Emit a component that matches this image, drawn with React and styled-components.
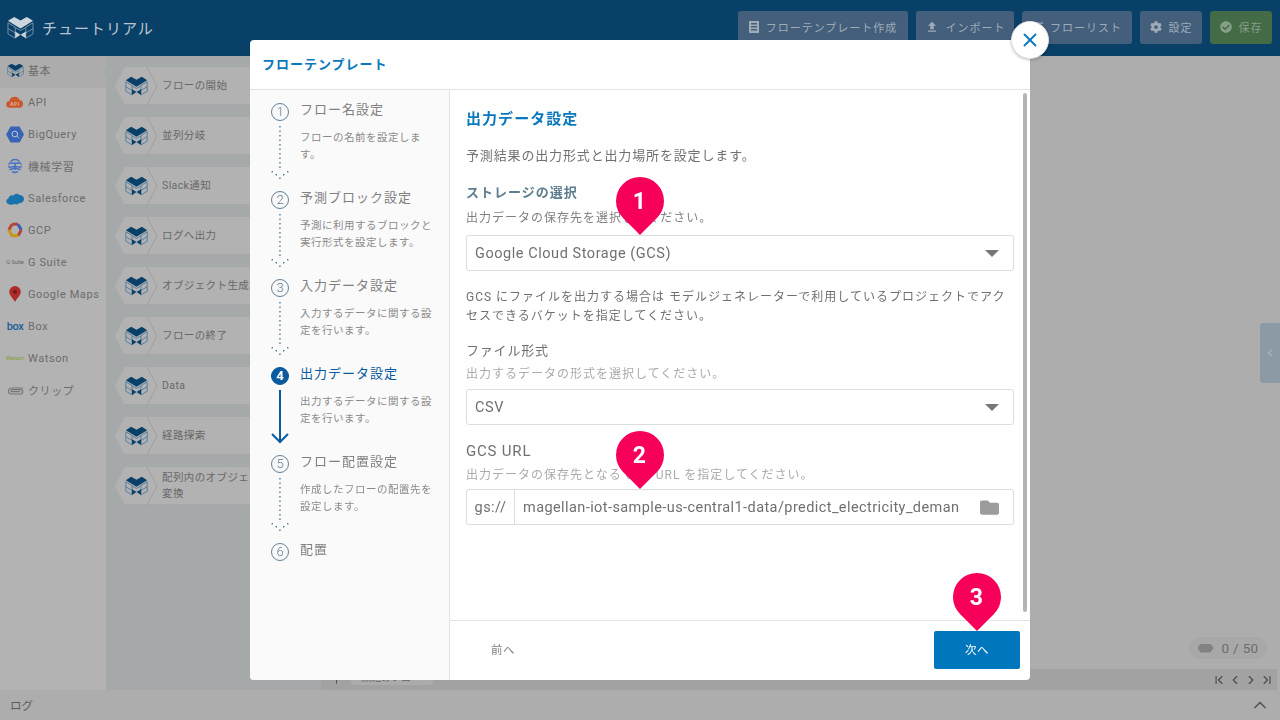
import React from "react";
import styled, { createGlobalStyle } from "styled-components";
import { FaCog, FaCheckCircle, FaFolder, FaList } from "react-icons/fa";
import { MdFileUpload } from "react-icons/md";
import { ChevronFirst, ChevronLast, ChevronLeft, ChevronRight, ChevronUp, Plus, X } from "lucide-react";

const GlobalStyle = createGlobalStyle`
  html, body { margin: 0; padding: 0; height: 100%; }
  body {
    font-family: Roboto, "Noto Sans CJK JP", sans-serif;
    overflow: hidden;
  }
  * { box-sizing: border-box; }
`;

// The page behind the dialog is painted in its dimmed colours directly.
const Page = styled.div`
  width: 1280px;
  height: 720px;
  display: flex;
  flex-direction: column;
  background: #adadad;
`;

/* top bar */
const Header = styled.header`
  height: 56px;
  flex: none;
  background: #094068;
  display: flex;
  align-items: center;
  justify-content: space-between;
  padding: 0 8px 1px 7px;
`;

const Brand = styled.div`
  display: flex;
  align-items: center;
  gap: 8px;
  color: #bcc6d0;
  font-size: 15px;
  letter-spacing: 1px;
`;

const Toolbar = styled.div`
  display: flex;
  gap: 8px;
`;

const ToolButton = styled.button`
  height: 33px;
  width: ${(p) => p.$w}px;
  border: 0;
  border-radius: 3px;
  padding: 0 0 2px;
  display: flex;
  align-items: center;
  justify-content: center;
  gap: 7px;
  font: inherit;
  font-size: 11px;
  letter-spacing: 1px;
  color: ${(p) => (p.$save ? "#869f86" : "#9fabb7")};
  background: ${(p) => (p.$save ? "#436b46" : "#445f7c")};
`;

/* main area */
const Main = styled.div`
  flex: 1;
  display: flex;
  min-height: 0;
`;

const Sidebar = styled.nav`
  width: 106px;
  flex: none;
  background: #b3b3b3;
`;

const SideItem = styled.div`
  position: relative;
  height: 32px;
  display: flex;
  align-items: center;
  padding: 0 0 4px 6px;
  gap: 4px;
  font-size: 11px;
  letter-spacing: 0.6px;
  white-space: nowrap;
  color: #6c6c6c;
  background: ${(p) => (p.$active ? "#acacac" : "transparent")};

  ${(p) =>
    p.$active &&
    `&::after {
      content: "";
      position: absolute;
      right: 0;
      top: 12px;
      border: 4px solid transparent;
      border-right-color: #a6a9a9;
    }`}
`;

const SideIcon = styled.span`
  width: 18px;
  height: 18px;
  flex: none;
  display: flex;
  align-items: center;
  justify-content: center;
`;

const Palette = styled.div`
  width: 215px;
  flex: none;
  background: #a6a9a9;
  padding: 11px 8px 0 9px;
  display: flex;
  flex-direction: column;
  gap: 12px;
`;

const Block = styled.div`
  position: relative;
  height: 38px;
  flex: none;
  display: flex;
  align-items: center;
  padding-left: 47px;
  background: #b2b2b2;
  border-bottom: 1px solid #a6a6a6;
  clip-path: polygon(0 50%, 10px 0, 100% 0, 100% 100%, 10px 100%);
  font-size: 10.5px;
  line-height: 16px;
  letter-spacing: 0.4px;
  color: #686868;
`;

const BlockName = styled.span`
  max-width: 128px;
`;

const BlockShape = styled.svg`
  position: absolute;
  left: 0;
  top: 0;
`;

const BlockIcon = styled.span`
  position: absolute;
  left: 10px;
  top: 9px;
  display: flex;
`;

const Canvas = styled.div`
  flex: 1;
  display: flex;
  flex-direction: column;
  min-width: 0;
`;

const Stage = styled.div`
  flex: 1;
  position: relative;
`;

const Counter = styled.div`
  position: absolute;
  right: 13px;
  bottom: 10px;
  width: 78px;
  height: 22px;
  border-radius: 11px;
  background: #a8a8a8;
  display: flex;
  align-items: center;
  justify-content: center;
  gap: 8px;
  font-size: 13.5px;
  letter-spacing: 0.3px;
  color: #6c6c6c;
`;

const CounterDot = styled.span`
  width: 16px;
  height: 9px;
  background: #828282;
  clip-path: polygon(3px 0, 13px 0, 100% 50%, 13px 100%, 3px 100%, 0 50%);
`;

const SideToggle = styled.div`
  position: absolute;
  right: 0;
  top: 267px;
  width: 20px;
  height: 60px;
  border-radius: 3px 0 0 3px;
  background: #8c9aa6;
  color: #bcc4cc;
  display: flex;
  align-items: center;
  justify-content: center;
`;

const TabBar = styled.div`
  height: 21px;
  flex: none;
  margin-right: 3px;
  background: #a2a2a2;
  display: flex;
  align-items: center;
  color: #555;
`;

const AddTab = styled.span`
  width: 30px;
  display: flex;
  justify-content: center;
`;

const Tab = styled.div`
  width: 82px;
  height: 15px;
  border-radius: 0 0 3px 3px;
  margin-top: -5px;
  background: #ababab;
  font-size: 10px;
  line-height: 15px;
  padding-left: 10px;
  color: #666;
`;

const Pager = styled.div`
  margin-left: auto;
  margin-right: 3px;
  display: flex;
  gap: 2px;
  color: #4c4c4c;
`;

const LogBar = styled.footer`
  height: 30px;
  flex: none;
  background: #adadad;
  display: flex;
  align-items: center;
  justify-content: space-between;
  padding: 0 10px;
  font-size: 11.5px;
  color: #5c5c5c;
`;

/* dialog */
const Overlay = styled.div`
  position: fixed;
  inset: 0;
  display: flex;
  justify-content: center;
  padding-top: 40px;
`;

const Modal = styled.div`
  position: relative;
  width: 780px;
  height: 640px;
  background: #fff;
  border-radius: 4px;
  display: flex;
  flex-direction: column;
`;

const ModalTitle = styled.div`
  height: 50px;
  flex: none;
  display: flex;
  align-items: center;
  padding: 0 0 2px 12px;
  border-bottom: 1px solid #e3e3e3;
  color: #0a78bd;
  font-size: 13px;
  font-weight: 700;
  letter-spacing: 1px;
`;

const CloseButton = styled.button`
  position: absolute;
  right: -19px;
  top: -19px;
  width: 38px;
  height: 38px;
  border-radius: 50%;
  border: 1px solid #e2e2e2;
  background: #fff;
  box-shadow: 0 1px 3px rgba(0, 0, 0, 0.25);
  color: #0a78bd;
  padding: 0;
  display: flex;
  align-items: center;
  justify-content: center;
`;

const ModalBody = styled.div`
  flex: 1;
  display: flex;
  min-height: 0;
`;

const Steps = styled.div`
  width: 200px;
  flex: none;
  background: #fafafa;
  border-right: 1px solid #e3e3e3;
  border-radius: 0 0 0 4px;
  padding: 10px 0 0 20px;
`;

const Step = styled.div`
  height: 88px;
  display: grid;
  grid-template-columns: 20px 1fr;
  column-gap: 10px;
  align-content: start;
`;

const StepMarker = styled.div`
  display: flex;
  flex-direction: column;
  align-items: center;
  padding-top: 3px;
`;

const StepNumber = styled.span`
  width: 18px;
  height: 18px;
  flex: none;
  border-radius: 50%;
  border: 1px solid ${(p) => (p.$active ? "#0a5a9e" : "#5f8096")};
  background: ${(p) => (p.$active ? "#0a5a9e" : "transparent")};
  color: ${(p) => (p.$active ? "#fff" : "#5f8096")};
  font-size: 13px;
  font-weight: ${(p) => (p.$active ? 700 : 300)};
  line-height: 16px;
  text-align: center;
`;

const StepLine = styled.svg`
  display: block;
  margin-top: 5px;
  flex: none;
`;

const StepTitle = styled.div`
  font-size: 13px;
  line-height: 20px;
  letter-spacing: 1px;
  color: ${(p) => (p.$active ? "#0a5a9e" : "#808080")};
`;

const StepText = styled.div`
  margin-top: 9px;
  max-width: 136px;
  font-size: 10.5px;
  line-height: 17px;
  letter-spacing: 0.5px;
  color: #8a8a8a;
`;

const Panel = styled.div`
  flex: 1;
  min-width: 0;
  display: flex;
  flex-direction: column;
`;

const Scroller = styled.div`
  position: relative;
  flex: 1;
  min-height: 0;
  padding: 19px 16px 0;
`;

const ScrollThumb = styled.div`
  position: absolute;
  right: 3px;
  top: 3px;
  bottom: 8px;
  width: 4px;
  border-radius: 2px;
  background: #b5b5b5;
`;

const PanelTitle = styled.h2`
  margin: 0;
  font-size: 15px;
  font-weight: 700;
  line-height: 20px;
  letter-spacing: 1.05px;
  color: #0a78bd;
`;

const Lead = styled.p`
  margin: 17px 0 0;
  font-size: 13px;
  line-height: 20px;
  letter-spacing: 0.85px;
  color: #707070;
`;

const SectionTitle = styled.h3`
  margin: 17px 0 0;
  font-size: 13px;
  font-weight: 700;
  line-height: 20px;
  letter-spacing: 1px;
  color: #5f7d8e;
`;

const FieldLabel = styled.div`
  margin-top: ${(p) => p.$mt || 16}px;
  font-size: ${(p) => p.$size || 13}px;
  line-height: 20px;
  letter-spacing: 0.8px;
  color: #707070;
`;

const Hint = styled.div`
  margin-top: ${(p) => p.$mt}px;
  font-size: 12px;
  line-height: 16px;
  letter-spacing: 1px;
  color: ${(p) => (p.$dark ? "#808080" : "#ababab")};
`;

const Note = styled.p`
  margin: 17px 0 0;
  font-size: 12px;
  line-height: 19px;
  letter-spacing: 1px;
  color: #707070;
`;

const SelectBox = styled.div`
  margin-top: ${(p) => p.$mt}px;
  height: 36px;
  border: 1px solid #ddd;
  border-radius: 3px;
  display: flex;
  align-items: center;
  justify-content: space-between;
  padding: 0 14px 0 8px;
  font-size: 14.5px;
  letter-spacing: 0.55px;
  color: #707070;
`;

const Caret = styled.span`
  width: 0;
  height: 0;
  border-left: 7px solid transparent;
  border-right: 7px solid transparent;
  border-top: 7px solid #777;
`;

const InputGroup = styled.div`
  margin-top: 6px;
  height: 36px;
  border: 1px solid #ddd;
  border-radius: 3px;
  display: flex;
  align-items: center;
  font-size: 14.5px;
  color: #707070;
`;

const InputPrefix = styled.span`
  width: 48px;
  height: 100%;
  flex: none;
  display: flex;
  align-items: center;
  justify-content: center;
  letter-spacing: 0.5px;
  border-right: 1px solid #ddd;
`;

const InputValue = styled.input`
  width: 436px;
  margin-left: 8px;
  flex: none;
  border: 0;
  outline: 0;
  padding: 0;
  background: transparent;
  font: inherit;
  color: inherit;
  letter-spacing: 0.42px;
`;

const InputIcon = styled.span`
  margin-left: 21px;
  display: flex;
  color: #9c9c9c;
`;

const ModalFooter = styled.div`
  height: 60px;
  flex: none;
  border-top: 1px solid #e3e3e3;
  display: flex;
  align-items: center;
  justify-content: space-between;
  padding: 0 10px 1px;
`;

const FooterButton = styled.button`
  width: 86px;
  height: 38px;
  border: 0;
  border-radius: 2px;
  padding: 0 0 2px;
  font: inherit;
  font-size: 11.5px;
  letter-spacing: 0.5px;
  color: ${(p) => (p.$primary ? "#fff" : "#808080")};
  background: ${(p) => (p.$primary ? "#0077bd" : "transparent")};
`;

/* numbered callouts lying over the dialog */
const Pin = styled.div`
  position: absolute;
  left: ${(p) => p.$x - 24}px;
  top: ${(p) => p.$y - 24}px;
  width: 48px;
  height: 48px;
  background: #f6005a;
  border-radius: 50% 50% 0 50%;
  transform: rotate(45deg);
  display: flex;
  align-items: center;
  justify-content: center;
`;

const PinNumber = styled.span`
  transform: rotate(-45deg);
  color: #fff;
  font-size: 23px;
  font-weight: 700;
`;

function CubeLogo({ width = 24, top = "#094068", line = "#3a6f96" }) {
  return (
    <svg width={width} height={width * 0.86} viewBox="0 0 28 24" fill="none">
      <path d="M1 5 7.500 1 14 4.500 20.500 1 27 5 20.500 9 14 13 7.500 9Z" fill={top} />
      <path d="M1 7v11.500l7.500 4.500V11.500L1 7ZM27 7v11.500L19.500 23V11.500L27 7ZM1 13l7.500 4.500M27 13l-7.500 4.500M8.500 12 14 15l5.500-3" stroke={line} strokeWidth="0.9" />
      <path d="M8.500 16 14 19.500l5.500-3.500v7L14 19.500 8.500 23Z" fill={top} />
    </svg>
  );
}

function ApiIcon() {
  return (
    <svg width="19" height="14" viewBox="0 0 19 14">
      <path d="M4 13a3.400 3.400 0 0 1-.6-6.800A5.800 5.800 0 0 1 14.400 5 4.100 4.100 0 0 1 15 13Z" fill="#c9582f" />
      <text x="9.500" y="11" fontSize="5" fontWeight="700" textAnchor="middle" fill="#e0b09a">API</text>
    </svg>
  );
}

function BigQueryIcon() {
  return (
    <svg width="18" height="17" viewBox="0 0 18 17">
      <path d="M0 8.500 4.500.5h9l4.500 8-4.500 8h-9Z" fill="#3764b4" />
      <circle cx="8.800" cy="8" r="2.800" fill="none" stroke="#bcc8dc" strokeWidth="1" />
      <path d="m11 10.200 2 2" stroke="#bcc8dc" strokeWidth="1" />
    </svg>
  );
}

function BrainIcon() {
  return (
    <svg width="16" height="16" viewBox="0 0 16 16" fill="none" stroke="#4573c0" strokeWidth="1.500" strokeLinecap="round">
      <path d="M4 3.200C5.500 1 10.500 1 12 3.200" />
      <path d="M2 6.200C2.300 4.700 3.500 4.500 5 5.200h6c1.500-.7 2.700-.5 3 1" />
      <path d="M1.500 8.500c1 1 2.500 1 4 .2h5c1.500.8 3 .8 4-.2" />
      <path d="M2.800 11.500c1.500 0 2.200-.5 3-1h4.400c.8.5 1.500 1 3 1" />
      <path d="M5.500 13.800c1.500.7 3.500.7 5 0M8 5.500v6" />
    </svg>
  );
}

function CloudIcon() {
  return (
    <svg width="18" height="13" viewBox="0 0 18 13">
      <path d="M4 12.500C1.500 12.500 0 10.800.4 8.800.7 7.300 1.700 6.700 2.500 6.500 2.700 3.800 5.500 2.500 7.500 3.600 8.500 1.300 12 .9 13.300 3c2.500-.3 4.700 1.500 4.700 4 0 2.800-2.500 4.300-4.500 4-1.200 1.500-3.500 1.800-5 .8-1 .8-3 1.200-4.500.7Z" fill="#1872ac" />
    </svg>
  );
}

function GcpIcon() {
  return (
    <svg width="16" height="16" viewBox="0 0 16 16" fill="none" strokeWidth="3">
      <path d="M5 2.200 1.800 8" stroke="#b84336" />
      <path d="M5 2.200h6" stroke="#b84336" />
      <path d="M11 2.200 14.300 8" stroke="#3764b4" />
      <path d="M14.300 8 11 13.800" stroke="#b84336" />
      <path d="M11 13.800H5L1.800 8" stroke="#c49818" />
    </svg>
  );
}

function MapPinIcon() {
  return (
    <svg width="12" height="16" viewBox="0 0 12 16">
      <path d="M6 0a5.800 5.800 0 0 1 5.800 5.800C11.800 9.500 7.500 12.500 6 16 4.500 12.500.2 9.500.2 5.800A5.800 5.800 0 0 1 6 0Z" fill="#b02c2c" />
      <circle cx="6" cy="5.800" r="2.100" fill="#701c1c" />
    </svg>
  );
}

function ClipIcon() {
  return (
    <svg width="17" height="10" viewBox="0 0 17 10" fill="none" stroke="#777" strokeWidth="1.200">
      <path d="M16 3H4.500a3 3 0 0 0 0 6h9a2.200 2.200 0 0 0 0-4.400H5a1 1 0 0 0 0 2h8" />
    </svg>
  );
}

const LogoText = styled.span`
  font-size: ${(p) => p.$size}px;
  font-weight: ${(p) => p.$weight || 400};
  letter-spacing: ${(p) => p.$spacing || 0}px;
  color: ${(p) => p.$color};
`;

function TemplateIcon() {
  return (
    <svg width="10" height="12" viewBox="0 0 10 12">
      <path fillRule="evenodd" d="M0 0h10v12H0ZM2 2v1.500h6V2Zm0 3v1.500h6V5Zm0 3v1.500h6V8Z" fill="currentColor" />
    </svg>
  );
}

function DottedLine() {
  return (
    <StepLine width="20" height="54" viewBox="0 0 20 54" fill="#5f8096">
      {[0, 4.5, 9, 13.5, 18, 22.5, 27, 31.5, 36, 40.5].map((y) => (
        <rect key={y} x="9.200" y={y} width="1.500" height="1.500" />
      ))}
      <rect x="1.500" y="45" width="1.500" height="1.500" />
      <rect x="5.500" y="48" width="1.500" height="1.500" />
      <rect x="9.200" y="51.500" width="1.500" height="1.500" />
      <rect x="13" y="48" width="1.500" height="1.500" />
      <rect x="17" y="45" width="1.500" height="1.500" />
    </StepLine>
  );
}

function SolidArrow() {
  return (
    <StepLine width="20" height="54" viewBox="0 0 20 54" fill="none" stroke="#0a5a9e" strokeWidth="2">
      <path d="M10 0v52M2 44l8 8 8-8" />
    </StepLine>
  );
}

const sideItems = [
  { label: "基本", icon: <CubeLogo width={17} />, active: true },
  { label: "API", icon: <ApiIcon /> },
  { label: "BigQuery", icon: <BigQueryIcon /> },
  { label: "機械学習", icon: <BrainIcon /> },
  { label: "Salesforce", icon: <CloudIcon /> },
  { label: "GCP", icon: <GcpIcon /> },
  { label: "G Suite", icon: <LogoText $size={5.5} $color="#666">G Suite</LogoText> },
  { label: "Google Maps", icon: <MapPinIcon /> },
  { label: "Box", icon: <LogoText $size={11} $weight={500} $spacing={-0.5} $color="#205f9a">box</LogoText> },
  { label: "Watson", icon: <LogoText $size={5.5} $color="#7f9e36">Watson</LogoText> },
  { label: "クリップ", icon: <ClipIcon /> },
];

const blocks = [
  "フローの開始",
  "並列分岐",
  "Slack通知",
  "ログへ出力",
  "オブジェクト生成",
  "フローの終了",
  "Data",
  "経路探索",
  "配列内のオブジェクトを変換",
];

const steps = [
  { title: "フロー名設定", text: "フローの名前を設定します。" },
  { title: "予測ブロック設定", text: "予測に利用するブロックと実行形式を設定します。" },
  { title: "入力データ設定", text: "入力するデータに関する設定を行います。" },
  { title: "出力データ設定", text: "出力するデータに関する設定を行います。", active: true },
  { title: "フロー配置設定", text: "作成したフローの配置先を設定します。" },
  { title: "配置" },
];

export default function App() {
  return (
    <Page>
      <GlobalStyle />
      <Header>
        <Brand>
          <CubeLogo width={27} top="#ccd4dc" line="#8099b0" />
          チュートリアル
        </Brand>
        <Toolbar>
          <ToolButton $w={170}><TemplateIcon />フローテンプレート作成</ToolButton>
          <ToolButton $w={98}><MdFileUpload size={14} />インポート</ToolButton>
          <ToolButton $w={110}><FaList size={11} />フローリスト</ToolButton>
          <ToolButton $w={62}><FaCog size={12} />設定</ToolButton>
          <ToolButton $w={62} $save><FaCheckCircle size={12} />保存</ToolButton>
        </Toolbar>
      </Header>

      <Main>
        <Sidebar>
          {sideItems.map((item) => (
            <SideItem key={item.label} $active={item.active}>
              <SideIcon>{item.icon}</SideIcon>
              {item.label}
            </SideItem>
          ))}
        </Sidebar>
        <Palette>
          {blocks.map((name) => (
            <Block key={name}>
              <BlockShape width="44" height="38" viewBox="0 0 44 38" fill="none">
                <path d="M32 0 42 19 32 38" stroke="#9f9f9f" />
              </BlockShape>
              <BlockIcon><CubeLogo width={23} /></BlockIcon>
              <BlockName>{name}</BlockName>
            </Block>
          ))}
        </Palette>
        <Canvas>
          <Stage>
            <SideToggle><ChevronLeft size={12} /></SideToggle>
            <Counter><CounterDot />0 / 50</Counter>
          </Stage>
          <TabBar>
            <AddTab><Plus size={13} /></AddTab>
            <Tab>無題のフロー</Tab>
            <Pager>
              <ChevronFirst size={14} />
              <ChevronLeft size={14} />
              <ChevronRight size={14} />
              <ChevronLast size={14} />
            </Pager>
          </TabBar>
        </Canvas>
      </Main>

      <LogBar>
        ログ
        <ChevronUp size={20} color="#555" />
      </LogBar>

      <Overlay>
        <Modal>
          <ModalTitle>フローテンプレート</ModalTitle>
          <CloseButton><X size={22} strokeWidth={2} /></CloseButton>
          <ModalBody>
            <Steps>
              {steps.map((step, i) => (
                <Step key={step.title}>
                  <StepMarker>
                    <StepNumber $active={step.active}>{i + 1}</StepNumber>
                    {step.text && (step.active ? <SolidArrow /> : <DottedLine />)}
                  </StepMarker>
                  <div>
                    <StepTitle $active={step.active}>{step.title}</StepTitle>
                    {step.text && <StepText>{step.text}</StepText>}
                  </div>
                </Step>
              ))}
            </Steps>
            <Panel>
              <Scroller>
                <ScrollThumb />
                <PanelTitle>出力データ設定</PanelTitle>
                <Lead>予測結果の出力形式と出力場所を設定します。</Lead>
                <SectionTitle>ストレージの選択</SectionTitle>
                <Hint $mt={7} $dark>出力データの保存先を選択してください。</Hint>
                <SelectBox $mt={9}>Google Cloud Storage (GCS)<Caret /></SelectBox>
                <Note>GCS にファイルを出力する場合は モデルジェネレーターで利用しているプロジェクトでアクセスできるバケットを指定してください。</Note>
                <FieldLabel $mt={15}>ファイル形式</FieldLabel>
                <Hint $mt={5}>出力するデータの形式を選択してください。</Hint>
                <SelectBox $mt={7}>CSV<Caret /></SelectBox>
                <FieldLabel $size={15}>GCS URL</FieldLabel>
                <Hint $mt={6}>出力データの保存先となる GCS URL を指定してください。</Hint>
                <InputGroup>
                  <InputPrefix>gs://</InputPrefix>
                  <InputValue readOnly value="magellan-iot-sample-us-central1-data/predict_electricity_demand/output" />
                  <InputIcon><FaFolder size={19} /></InputIcon>
                </InputGroup>
              </Scroller>
              <ModalFooter>
                <FooterButton>前へ</FooterButton>
                <FooterButton $primary>次へ</FooterButton>
              </ModalFooter>
            </Panel>
          </ModalBody>
          <Pin $x={389.5} $y={161}><PinNumber>1</PinNumber></Pin>
          <Pin $x={390} $y={415}><PinNumber>2</PinNumber></Pin>
          <Pin $x={727} $y={557}><PinNumber>3</PinNumber></Pin>
        </Modal>
      </Overlay>
    </Page>
  );
}
